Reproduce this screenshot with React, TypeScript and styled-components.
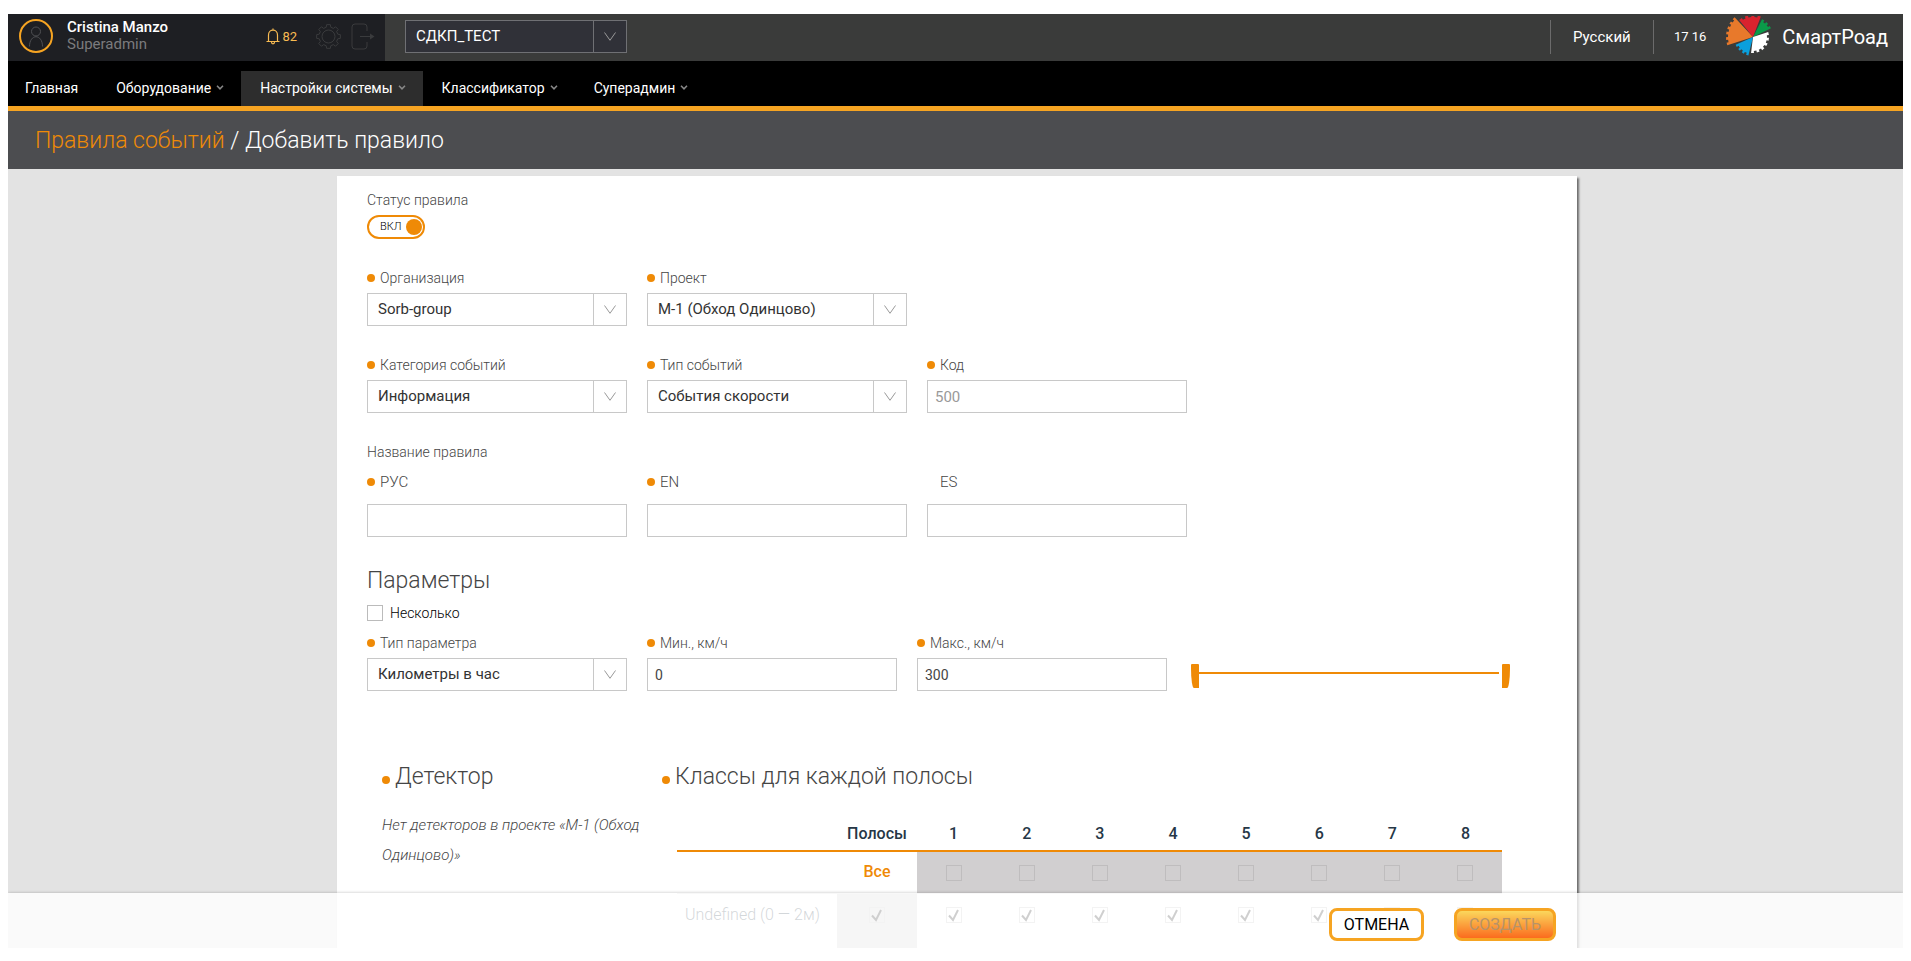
import React, { useId, useState } from "react";
import styled, { createGlobalStyle, css } from "styled-components";

const orange = "#ef8a06";
const amber = "#f6a422";
const line = "#c8c8c8";

const GlobalStyle = createGlobalStyle`
  *, *::before, *::after { box-sizing: border-box; }
  body { margin: 0; background: #fff; color: #454545; font: 300 14px/20px Roboto, sans-serif; }
  button, input, select { font-family: inherit; margin: 0; border-radius: 0; }
  a { color: inherit; text-decoration: none; }
`;

const Page = styled.div`
  display: flex;
  flex-direction: column;
  height: 100vh;
  padding: 14px 8px 13px;
`;
const Shell = styled.div`
  position: relative;
  display: flex;
  flex: 1;
  flex-direction: column;
  min-height: 0;
  overflow: hidden;
  background: #e3e3e3;
`;
const TopBar = styled.header`
  display: flex;
  flex: none;
  align-items: center;
  height: 47px;
  padding-bottom: 2px;
  background: #3a3b3a;
  color: #fff;
`;
const UserPanel = styled.div`
  display: flex;
  align-items: center;
  align-self: flex-start;
  width: 377px;
  height: 47px;
  margin-right: 20px;
  padding: 0 10px 3px 11px;
  background: #1e1f23;
`;
const Avatar = styled.svg`
  flex: none;
  margin-right: 14px;
`;
const UserText = styled.div`
  flex: 1;
  font-size: 15px;
  line-height: 17px;
`;
const UserName = styled.div`
  font-weight: 500;
`;
const UserRole = styled.div`
  font-weight: 400;
  color: #7b7b7d;
`;
const IconButton = styled.button`
  display: flex;
  align-items: center;
  gap: 2px;
  padding: 0;
  border: 0;
  background: none;
  color: #3a3b3d;
  font-size: 13px;
  font-weight: 400;
`;
const Alerts = styled(IconButton)`
  color: #f8bb52;
  margin-right: 19px;
`;
const Settings = styled(IconButton)`
  margin-right: 10px;
`;
const TopRight = styled.div`
  display: flex;
  align-items: center;
  margin-left: auto;
  padding-right: 15px;
`;
const Language = styled.button`
  height: 34px;
  width: 104px;
  padding: 0;
  border: solid #6b6b6b;
  border-width: 0 1px;
  background: none;
  color: #fff;
  font-size: 15px;
  font-weight: 400;
`;
const Clock = styled.time`
  margin: 0 19px 0 20px;
  font-size: 13px;
  font-weight: 400;
`;
const Brand = styled.a`
  display: flex;
  align-items: center;
  gap: 11px;
  font-size: 20px;
  font-weight: 400;
`;

const Nav = styled.nav`
  display: flex;
  flex: none;
  align-items: flex-end;
  height: 50px;
  background: #000;
  border-bottom: 5px solid ${amber};
`;
const NavLink = styled.a<{ $active?: boolean }>`
  display: flex;
  align-items: center;
  gap: 5px;
  height: 35px;
  padding: 0 17px 2px 19px;
  color: #fff;
  font-size: 14px;
  font-weight: 400;
  background: ${(p) => (p.$active ? "#2d2d2d" : "none")};
  &:first-child { padding: 0 19px 2px 17px; }
`;
const TitleBar = styled.div`
  flex: none;
  padding: 15px 27px 13px;
  background: #4c4d50;
`;
const Title = styled.h1`
  margin: 0;
  color: #fff;
  font-size: 23px;
  line-height: 30px;
  font-weight: 300;
  a { color: ${orange}; }
`;

const Scroll = styled.main`
  flex: 1;
  min-height: 0;
  overflow-y: auto;
  scrollbar-width: none;
  padding: 7px 0 0 3px;
`;
const Card = styled.form`
  width: 1240px;
  max-width: 100%;
  margin: 0 auto;
  padding: 14px 30px 120px;
  background: #fff;
  box-shadow: 2px 2px 2px #6d6d6d;
`;
const Row = styled.div<{ $gap?: number }>`
  display: flex;
  flex-wrap: wrap;
  gap: 20px;
  margin-bottom: ${(p) => p.$gap ?? 0}px;
`;
const FieldBox = styled.div<{ $width: number }>`
  display: flex;
  flex-direction: column;
  width: ${(p) => p.$width}px;
`;
const Label = styled.label<{ $required?: boolean; $tall?: boolean }>`
  display: flex;
  align-items: center;
  height: ${(p) => (p.$tall ? 42 : 28)}px;
  padding-bottom: 2px;
  font-size: ${(p) => (p.$tall ? 15 : 14)}px;
  &::before {
    content: "";
    width: 8px;
    height: 8px;
    margin-right: 5px;
    border-radius: 50%;
    background: ${(p) => (p.$required ? orange : "none")};
  }
`;
const Caption = styled.div`
  font-size: 14px;
  line-height: 20px;
`;
const Input = styled.input<{ $large?: boolean }>`
  width: 100%;
  height: 33px;
  padding: 0 7px;
  border: 1px solid ${line};
  outline: 0;
  background: #fff;
  color: #454545;
  font-size: ${(p) => (p.$large ? 15 : 14)}px;
  font-weight: 400;
  &::placeholder { color: #999; }
`;
const SelectWrap = styled.div<{ $dark?: boolean }>`
  display: grid;
  grid-template-columns: 1fr 33px;
  width: 100%;
  height: 33px;
  border: 1px solid ${line};
  color: #333;
  ${(p) =>
    p.$dark &&
    css`
      width: 222px;
      border-color: #6f7074;
      background: #303138;
      color: #fff;
    `}
  select {
    grid-area: 1 / 1 / 2 / 3;
    appearance: none;
    width: 100%;
    padding: 0 44px 1px 10px;
    border: 0;
    outline: 0;
    background: none;
    color: inherit;
    font-size: 15px;
    font-weight: 400;
  }
  span {
    grid-area: 1 / 2;
    display: flex;
    align-items: center;
    justify-content: center;
    border-left: 1px solid ${(p) => (p.$dark ? "#6f7074" : line)};
    color: #999;
    pointer-events: none;
  }
`;
const Toggle = styled.label`
  display: flex;
  align-items: center;
  justify-content: space-between;
  width: 58px;
  height: 24px;
  margin: 5px 0 26px;
  padding: 0 1px 0 11px;
  border: 2px solid ${orange};
  border-radius: 12px;
  color: #000;
  font-size: 11px;
  input {
    appearance: none;
    width: 16px;
    height: 16px;
    margin: 0;
    border-radius: 50%;
    background: ${orange};
  }
`;
const Heading = styled.h2<{ $required?: boolean }>`
  display: flex;
  align-items: center;
  gap: 5px;
  margin: 0;
  font-size: 23px;
  line-height: 30px;
  font-weight: 300;
  ${(p) =>
    p.$required &&
    css`
      &::before {
        content: "";
        width: 8px;
        height: 8px;
        margin-top: 6px;
        border-radius: 50%;
        background: ${orange};
      }
    `}
`;
const Check = styled.input<{ $faint?: boolean }>`
  appearance: none;
  flex: none;
  display: inline-block;
  vertical-align: middle;
  width: 16px;
  height: 16px;
  border: 1px solid ${(p) => (p.$faint ? "#bfbdbe" : "#bbb")};
  &:checked {
    border-color: #c4c4c4;
    background: url("data:image/svg+xml,%3Csvg xmlns='http://www.w3.org/2000/svg' viewBox='0 0 14 14'%3E%3Cpath d='M2 7.5 6 12 11 2' fill='none' stroke='%23111' stroke-width='2'/%3E%3C/svg%3E") center / 14px 14px;
  }
`;
const CheckLine = styled.label`
  display: flex;
  align-items: center;
  gap: 7px;
  height: 20px;
  margin: 7px 0;
  color: #000;
`;
const RangeWrap = styled.div`
  display: grid;
  align-self: flex-end;
  width: 319px;
  height: 24px;
  margin: 0 0 3px 4px;
  background: linear-gradient(${orange}, ${orange}) 8px 8px / 300px 2px no-repeat;
`;
const Range = styled.input<{ $end?: boolean }>`
  grid-area: 1 / 1;
  appearance: none;
  width: 100%;
  height: 24px;
  background: none;
  pointer-events: none;
  &::-webkit-slider-thumb {
    appearance: none;
    width: 8px;
    height: 24px;
    background: ${orange};
    border-radius: ${(p) => (p.$end ? "1px 1px 3px 0 / 1px 1px 20px 0" : "1px 1px 0 3px / 1px 1px 0 20px")};
    pointer-events: auto;
  }
`;
const Columns = styled.div`
  display: flex;
  gap: 20px;
  padding: 0 15px;
`;
const DetectorColumn = styled.section`
  width: 260px;
`;
const ClassColumn = styled.section`
  flex: 1;
  padding-right: 30px;
`;
const EmptyNote = styled.p`
  margin: 18px 0 0;
  font-size: 15px;
  line-height: 30px;
  font-style: italic;
`;
const Table = styled.table`
  width: calc(100% - 15px);
  margin: 25px 0 0 15px;
  border-collapse: collapse;
  table-layout: fixed;
  font-size: 16px;
  th, td { padding: 0; text-align: center; }
  thead th { height: 34px; color: #263746; font-weight: 500; border-bottom: 2px solid ${orange}; }
  tbody tr { height: 42px; border-bottom: 1px solid #ddd; }
  tbody tr + tr { height: 64px; }
  tbody tr + tr > * { padding-top: 11px; vertical-align: top; }
  tbody th { padding-left: 8px; text-align: left; font-weight: 300; color: #263746; }
  col:first-child { width: 160px; }
  col:nth-child(2) { width: 80px; }
`;
const AllCell = styled.td`
  color: ${orange};
  font-weight: 500;
`;
const GreyCell = styled.td`
  background: #d1cfd0;
`;
const Footer = styled.footer`
  position: absolute;
  inset: auto 0 0;
  display: flex;
  justify-content: flex-end;
  gap: 30px;
  height: 55px;
  padding: 15px 347px 0 0;
  background: rgba(255, 255, 255, 0.8);
  box-shadow: 0 0 3px rgba(0, 0, 0, 0.25);
`;
const Action = styled.button<{ $primary?: boolean }>`
  height: 33px;
  width: ${(p) => (p.$primary ? 102 : 95)}px;
  padding: 0;
  border: 3px solid ${amber};
  border-radius: 8px;
  background: ${(p) => (p.$primary ? "linear-gradient(#fbd75c, #fb6b1e)" : "#fff")};
  color: ${(p) => (p.$primary ? "#b79368" : "#000")};
  font-size: 16px;
  font-weight: 400;
`;

const Chevron = () => (
  <svg width="12" height="9" viewBox="0 0 12 9" fill="none" stroke="currentColor">
    <path d="M.5.5 6 8.3 11.500.5" />
  </svg>
);
const SmallChevron = () => (
  <svg width="8" height="5" viewBox="0 0 8 5" fill="none" stroke="#888" strokeWidth="1.5">
    <path d="M1 .7 4 3.800 7 .7" />
  </svg>
);

function Select({ id, value, dark, label }: { id?: string; value: string; dark?: boolean; label?: string }) {
  return (
    <SelectWrap $dark={dark}>
      <select id={id} aria-label={label} defaultValue={value}>
        <option>{value}</option>
      </select>
      <span><Chevron /></span>
    </SelectWrap>
  );
}

type FieldProps = {
  label: string;
  value?: string;
  select?: boolean;
  optional?: boolean;
  width?: number;
  tall?: boolean;
  placeholder?: string;
};
function Field({ label, value = "", select, optional, width = 260, tall, placeholder }: FieldProps) {
  const id = useId();
  return (
    <FieldBox $width={width}>
      <Label htmlFor={id} $required={!optional} $tall={tall}>{label}</Label>
      {select ? <Select id={id} value={value} /> : (
        <Input id={id} defaultValue={value} placeholder={placeholder} $large={!!placeholder} />
      )}
    </FieldBox>
  );
}

const polar = (cx: number, cy: number, angle: number, r: number) => {
  const a = (angle * Math.PI) / 180;
  return `${(cx + r * Math.cos(a)).toFixed(2)},${(cy + r * Math.sin(a)).toFixed(2)}`;
};

const sectors = [
  { color: "#e8792b", from: 162, to: 227, r: 27, teeth: 6 },
  { color: "#d9232e", from: 231, to: 291, r: 22, teeth: 4 },
  { color: "#0a9a49", from: 297, to: 334, r: 20, teeth: 3 },
  { color: "#ffffff", from: 342, to: 457, r: 16, teeth: 6 },
  { color: "#0a9fdc", from: 104, to: 156, r: 19, teeth: 4 },
];
const sectorPoints = (from: number, to: number, r: number, teeth: number) => {
  const count = teeth * 2 - 1;
  const step = (to - from) / count;
  const pts = ["28,21"];
  for (let i = 0; i < count; i++) {
    const radius = i % 2 ? r - 2 : r;
    pts.push(polar(28, 21, from + i * step, radius), polar(28, 21, from + (i + 1) * step, radius));
  }
  return pts.join(" ");
};
const Logo = () => (
  <svg width="46" height="42" viewBox="0 0 46 42">
    {sectors.map((s) => (
      <polygon key={s.color} points={sectorPoints(s.from, s.to, s.r, s.teeth)} fill={s.color} />
    ))}
  </svg>
);

const cogPoints = Array.from({ length: 8 }, (_, i) => {
  const a = i * 45;
  return [
    polar(12.5, 12.5, a - 14, 9.5),
    polar(12.5, 12.5, a - 9, 12),
    polar(12.5, 12.5, a + 9, 12),
    polar(12.5, 12.5, a + 14, 9.5),
  ].join(" ");
}).join(" ");

const lanes = [1, 2, 3, 4, 5, 6, 7, 8];

export default function App() {
  const [enabled, setEnabled] = useState(true);
  return (
    <Page>
      <GlobalStyle />
      <Shell>
        <TopBar>
          <UserPanel>
            <Avatar width="34" height="34" viewBox="0 0 34 34" fill="none">
              <circle cx="17" cy="17" r="16" stroke={amber} strokeWidth="2" />
              <circle cx="17" cy="12.5" r="4.5" stroke="#4f5053" />
              <path d="M10.500 27.500c0-13 13-13 13 0" stroke="#4f5053" />
            </Avatar>
            <UserText>
              <UserName>Cristina Manzo</UserName>
              <UserRole>Superadmin</UserRole>
            </UserText>
            <Alerts type="button">
              <svg width="14" height="17" viewBox="0 0 14 17" fill="none" stroke="currentColor" strokeWidth="1.2">
                <path d="M.5 13.500h13M2.500 13.500V7c0-6.500 9-6.500 9 0v6.500M5.500 14c0 2.500 3 2.500 3 0M7 .5v2" />
              </svg>
              82
            </Alerts>
            <Settings type="button" aria-label="Настройки">
              <svg width="25" height="25" viewBox="0 0 25 25" fill="none" stroke="currentColor" strokeLinejoin="round">
                <circle cx="12.5" cy="12.5" r="6.5" />
                <polygon points={cogPoints} />
              </svg>
            </Settings>
            <IconButton type="button" aria-label="Выйти">
              <svg width="24" height="27" viewBox="0 0 24 27" fill="none" stroke="currentColor">
                <path d="M16 8V4q0-3-3-3H4Q1 1 1 4v19q0 3 3 3h9q3 0 3-3v-4M9 13.500h11" />
                <path d="m19 10.500 4.500 3-4.500 3z" fill="currentColor" stroke="none" />
              </svg>
            </IconButton>
          </UserPanel>
          <Select value="СДКП_ТЕСТ" label="Проект" dark />
          <TopRight>
            <Language type="button">Русский</Language>
            <Clock>17 16</Clock>
            <Brand href="#"><Logo />СмартРоад</Brand>
          </TopRight>
        </TopBar>
        <Nav>
          <NavLink href="#">Главная</NavLink>
          <NavLink href="#">Оборудование <SmallChevron /></NavLink>
          <NavLink href="#" $active>Настройки системы <SmallChevron /></NavLink>
          <NavLink href="#">Классификатор <SmallChevron /></NavLink>
          <NavLink href="#">Суперадмин <SmallChevron /></NavLink>
        </Nav>
        <TitleBar>
          <Title><a href="#">Правила событий</a> / Добавить правило</Title>
        </TitleBar>
        <Scroll>
          <Card id="rule" onSubmit={(e) => e.preventDefault()}>
            <Caption>Статус правила</Caption>
            <Toggle>
              {enabled ? "ВКЛ" : "ВЫКЛ"}
              <input type="checkbox" role="switch" checked={enabled} onChange={() => setEnabled(!enabled)} />
            </Toggle>
            <Row $gap={26}>
              <Field label="Организация" value="Sorb-group" select />
              <Field label="Проект" value="М-1 (Обход Одинцово)" select />
            </Row>
            <Row $gap={29}>
              <Field label="Категория событий" value="Информация" select />
              <Field label="Тип событий" value="События скорости" select />
              <Field label="Код" placeholder="500" />
            </Row>
            <Caption>Название правила</Caption>
            <Row $gap={29}>
              <Field label="РУС" tall />
              <Field label="EN" tall />
              <Field label="ES" tall optional />
            </Row>
            <Heading>Параметры</Heading>
            <CheckLine><Check type="checkbox" />Несколько</CheckLine>
            <Row $gap={71}>
              <Field label="Тип параметра" value="Километры в час" select />
              <Field label="Мин., км/ч" value="0" width={250} />
              <Field label="Макс., км/ч" value="300" width={250} />
              <RangeWrap>
                <Range type="range" aria-label="Минимум" min={0} max={300} defaultValue={0} />
                <Range type="range" aria-label="Максимум" min={0} max={300} defaultValue={300} $end />
              </RangeWrap>
            </Row>
            <Columns>
              <DetectorColumn>
                <Heading $required>Детектор</Heading>
                <EmptyNote>Нет детекторов в проекте «М-1 (Обход Одинцово)»</EmptyNote>
              </DetectorColumn>
              <ClassColumn>
                <Heading $required>Классы для каждой полосы</Heading>
                <Table>
                  <colgroup><col /><col />{lanes.map((n) => <col key={n} />)}</colgroup>
                  <thead>
                    <tr><th /><th scope="col">Полосы</th>{lanes.map((n) => <th key={n} scope="col">{n}</th>)}</tr>
                  </thead>
                  <tbody>
                    <tr>
                      <td /><AllCell>Все</AllCell>
                      {lanes.map((n) => <GreyCell key={n}><Check $faint type="checkbox" aria-label={`Полоса ${n}`} /></GreyCell>)}
                    </tr>
                    <tr>
                      <th scope="row">Undefined (0 — 2м)</th>
                      <GreyCell><Check type="checkbox" aria-label="Все полосы" defaultChecked /></GreyCell>
                      {lanes.map((n) => <td key={n}><Check type="checkbox" aria-label={`Undefined, полоса ${n}`} defaultChecked /></td>)}
                    </tr>
                  </tbody>
                </Table>
              </ClassColumn>
            </Columns>
          </Card>
        </Scroll>
        <Footer>
          <Action type="button">ОТМЕНА</Action>
          <Action $primary form="rule" type="submit" disabled>СОЗДАТЬ</Action>
        </Footer>
      </Shell>
    </Page>
  );
}
